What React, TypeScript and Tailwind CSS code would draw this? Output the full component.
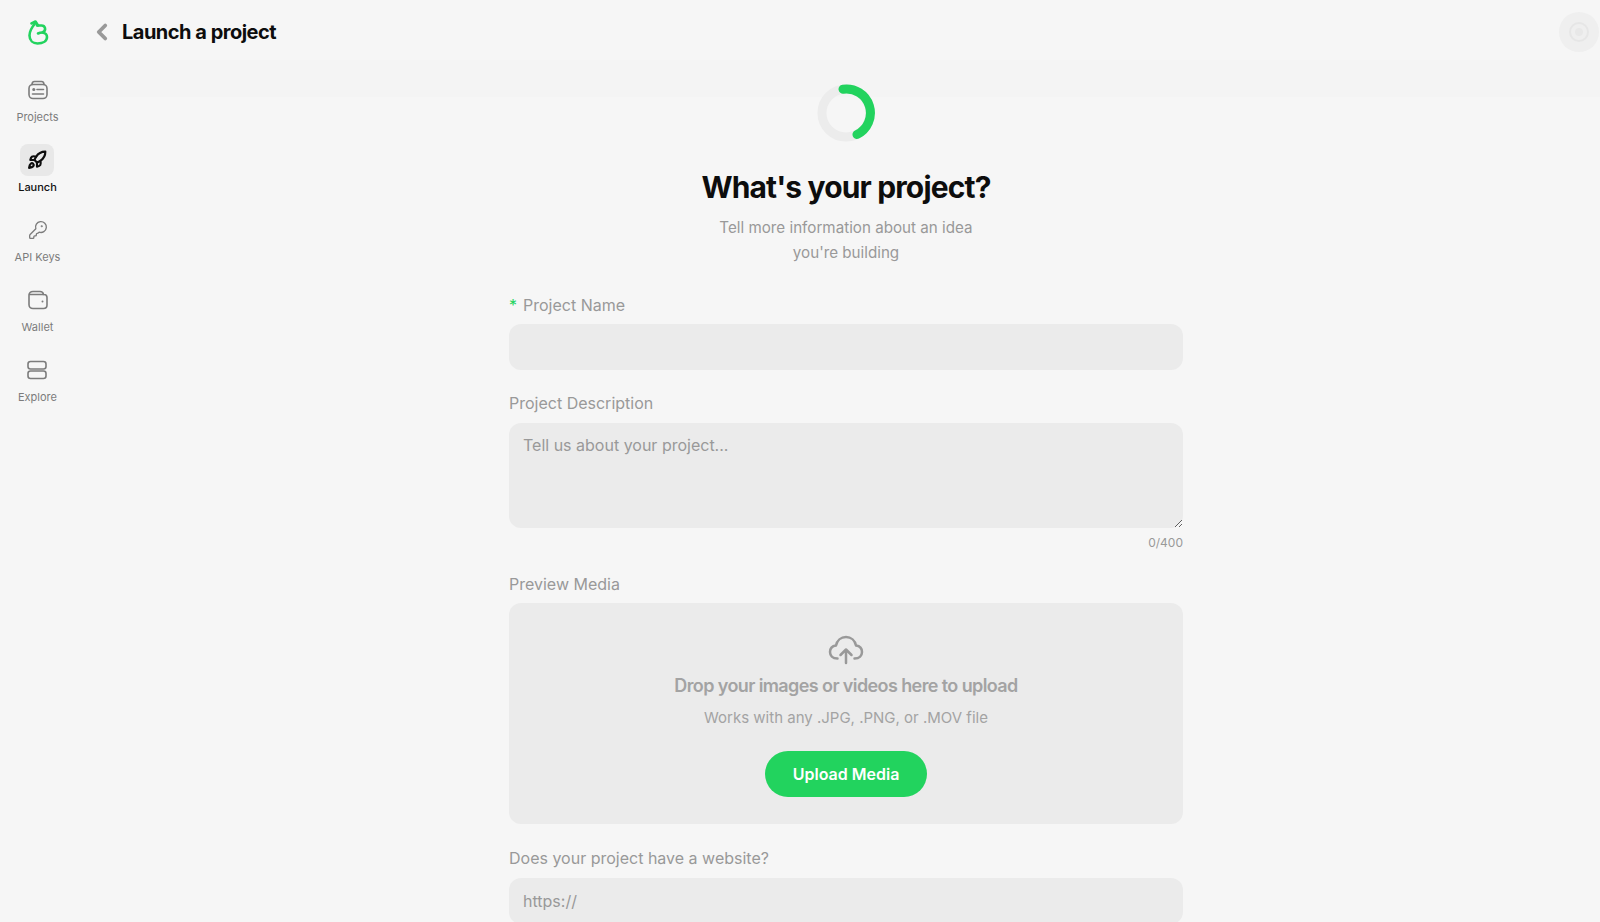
import { ChevronLeft, KeyRound, Rocket } from 'lucide-react';

const FONT = "font-['Inter',sans-serif]";

function ProjectsIcon() {
  return (
    <svg width="20" height="20" viewBox="0 0 20 20" fill="none" stroke="currentColor" strokeWidth="1.6" strokeLinecap="round">
      <rect x="1" y="4.500" width="18" height="14" rx="4" />
      <path d="M4 4.500c0-2 1-3 2.500-3h7c1.500 0 2.500 1 2.500 3" />
      <circle cx="5.800" cy="9.500" r="0.800" fill="currentColor" />
      <path d="M9 9.500h6.500M4.500 14h11" />
    </svg>
  );
}

function WalletIcon() {
  return (
    <svg width="20" height="20" viewBox="0 0 20 20" fill="none" stroke="currentColor" strokeWidth="1.6" strokeLinecap="round">
      <path d="M1 5.500C1 3 2.500 1.500 5 1.500h7c2 0 3.200 1 3.500 3H16c2 0 3 1.200 3 3V15c0 2-1.200 3.500-3.500 3.500H5C2.500 18.500 1 17 1 14.500z" />
      <path d="M1.500 4.500h14" />
      <circle cx="14.500" cy="11.500" r="1" fill="currentColor" stroke="none" />
    </svg>
  );
}

function ExploreIcon() {
  return (
    <svg width="20" height="20" viewBox="0 0 20 20" fill="none" stroke="currentColor" strokeWidth="1.6">
      <rect x="1" y="1.500" width="18" height="7.500" rx="2.500" />
      <rect x="1" y="11" width="18" height="7.500" rx="2.500" />
    </svg>
  );
}

function Logo() {
  return (
    <svg width="22" height="25" viewBox="0 0 22 25" fill="none" stroke="#22d35e" strokeWidth="2.600" strokeLinecap="round" strokeLinejoin="round">
      <path d="M8.500 3C5 7 2.500 11 2.500 15.500c0 5 3.500 8 8 8 5.500 0 9.500-2.500 9.500-6.500 0-2.500-1.800-4-4.500-4.500 2-1 3-2.500 2.500-4.500-.5-1.800-2-2.500-3.500-2.500H10" />
      <path d="M15.500 12.500c-1.800 0-3.200.300-4.500 1" />
      <path d="M4.500 3.500L8.500 1.500l2.500 4" />
    </svg>
  );
}

function NavItem({ label, icon, active = false }: { label: string; icon: React.ReactNode; active?: boolean }) {
  return (
    <div className="flex flex-col items-center">
      <div className={`flex h-8 w-[34px] items-center justify-center rounded-lg ${active ? 'bg-[#e8e8e8] text-[#0d0d0d]' : 'text-[#7c7c7c]'}`}>
        {icon}
      </div>
      <span className={`mt-[3px] text-[11px] leading-4 ${active ? 'font-medium text-[#111]' : 'text-[#7c7c7c]'}`}>
        {label}
      </span>
    </div>
  );
}

function Sidebar() {
  return (
    <aside className="flex w-[80px] shrink-0 flex-col items-center pr-[5px] pt-[20px]">
      <Logo />
      <nav className="mt-[29px] flex flex-col items-center gap-[19px]">
        <NavItem label="Projects" icon={<ProjectsIcon />} />
        <NavItem label="Launch" active icon={<Rocket size={20} strokeWidth={2.600} />} />
        <NavItem label="API Keys" icon={<KeyRound size={20} strokeWidth={1.600} />} />
        <NavItem label="Wallet" icon={<WalletIcon />} />
        <NavItem label="Explore" icon={<ExploreIcon />} />
      </nav>
    </aside>
  );
}

function ProgressRing() {
  return (
    <svg width="58" height="58" viewBox="0 0 58 58" fill="none" strokeWidth="9">
      <circle cx="29" cy="29" r="24" stroke="#ececec" />
      <path d="M 26 5.200 A 24 24 0 0 1 40 50.500" stroke="#22d35e" strokeLinecap="round" />
    </svg>
  );
}

function Label({ children, required = false }: { children: React.ReactNode; required?: boolean }) {
  return (
    <label className="block text-base leading-6 text-[#999999]">
      {required && <span className="mr-[6px] text-[#22d35e]">*</span>}
      {children}
    </label>
  );
}

const fieldClass =
  'block w-full rounded-xl bg-[#ebebeb] px-3.5 text-base text-[#333] outline-none placeholder:text-[#999999]';

export default function App() {
  return (
    <div className={`relative flex h-[922px] w-[1600px] overflow-hidden bg-[#f6f6f6] ${FONT}`}>
      <Sidebar />
      <main className="flex min-w-0 flex-1 flex-col">
        <header className="flex h-[60px] shrink-0 items-center pl-[9px] pr-[1px] pt-[4px]">
          <ChevronLeft size={26} strokeWidth={3.500} className="text-[#999999]" />
          <h1 className="ml-[7px] text-[20px] font-bold tracking-[-0.5px] text-[#0d0d0d]">Launch a project</h1>
          <div className="ml-auto flex h-10 w-10 items-center justify-center rounded-full bg-[#efefef]">
            <div className="flex h-5 w-5 items-center justify-center rounded-full border-2 border-[#e6e6e6]">
              <div className="h-2 w-2 rounded-full bg-[#e8e8e8]" />
            </div>
          </div>
        </header>

        <div className="relative flex flex-1 flex-col items-center pl-[12px] pt-[24px]">
          <div className="absolute inset-x-0 top-0 h-[37px] bg-[#f4f4f4]" />
          <div className="relative flex flex-col items-center">
            <ProgressRing />
            <h2 className="mt-[25px] text-3xl font-bold leading-10 tracking-[-0.85px] text-[#0d0d0d]">What's your project?</h2>
            <p className="mt-[8px] w-[280px] text-center text-[15.200px] leading-[25px] text-[#999999]">
              Tell more information about an idea you're building
            </p>
          </div>

          <form className="relative mt-[28px] flex w-[674px] flex-col">
            <Label required>Project Name</Label>
            <input className={`${fieldClass} mt-[7px] h-[46px]`} />

            <div className="mt-[21px]">
              <Label>Project Description</Label>
            </div>
            <textarea
              className={`${fieldClass} mt-2 h-[105px] py-2.5`}
              placeholder="Tell us about your project..."
            />
            <div className="mt-[7px] text-right text-[12px] leading-4 text-[#999999]">0/400</div>

            <div className="mt-[21px]">
              <Label>Preview Media</Label>
            </div>
            <div className="mt-[7px] flex h-[221px] flex-col items-center rounded-xl bg-[#ebebeb] pt-[32px]">
              <svg width="36" height="30" viewBox="0 0 36 30" fill="none" stroke="#999999" strokeWidth="2.500" strokeLinecap="round" strokeLinejoin="round">
                <path d="M18 15v13M12.500 20L18 14.500 23.500 20" />
                <path d="M9.500 23.500C4.500 23.500 2 20.500 2 17c0-3.500 2.500-6 6-6.500C9 5.500 13 2 18 2c5 0 9 3.500 10 8.500 3.500.500 6 3 6 6.500 0 3.500-2.500 6.500-7.500 6.500" />
              </svg>
              <p className="mt-[7px] text-lg font-semibold leading-7 tracking-[-0.6px] text-[#a3a3a3]">Drop your images or videos here to upload</p>
              <p className="mt-[6px] text-[15px] leading-6 text-[#a3a3a3]">Works with any .JPG, .PNG, or .MOV file</p>
              <button type="button" className="mt-[21px] h-[46px] w-[162px] self-center rounded-full bg-[#22d35e] text-base font-semibold text-white">
                Upload Media
              </button>
            </div>

            <div className="mt-[22px]">
              <Label>Does your project have a website?</Label>
            </div>
            <input className={`${fieldClass} mt-2 h-[46px]`} placeholder="https://" />
          </form>
        </div>
      </main>
    </div>
  );
}
